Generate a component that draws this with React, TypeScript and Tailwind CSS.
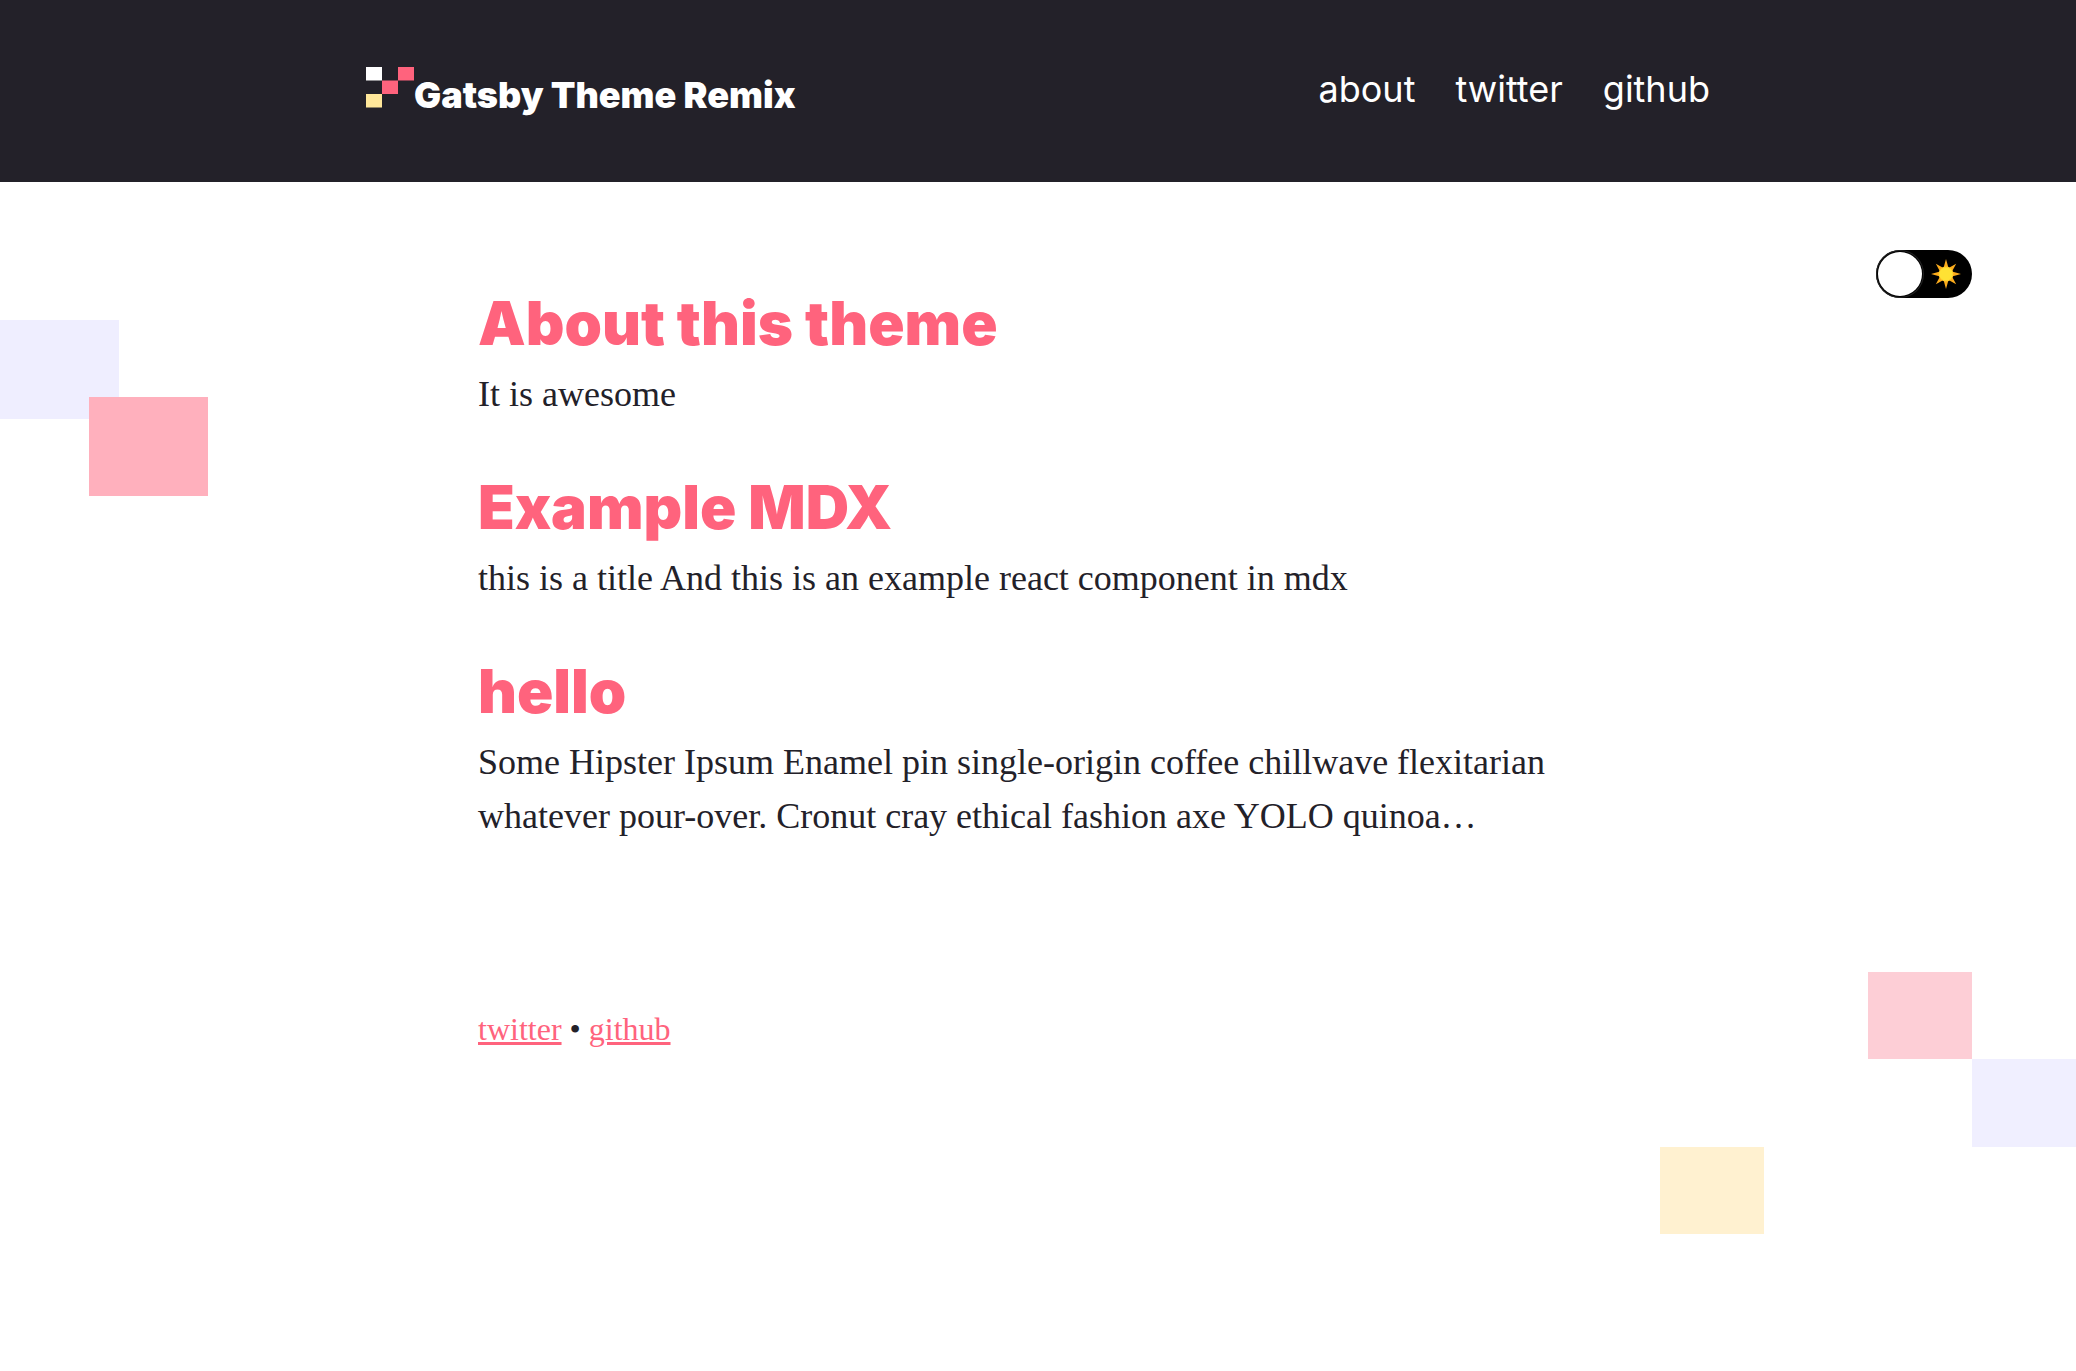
import { useState } from "react";

const posts = [
  { title: "About this theme", excerpt: "It is awesome" },
  { title: "Example MDX", excerpt: "this is a title And this is an example react component in mdx" },
  {
    title: "hello",
    excerpt:
      "Some Hipster Ipsum Enamel pin single-origin coffee chillwave flexitarian whatever pour-over. Cronut cray ethical fashion axe YOLO quinoa…",
  },
];

function Logo() {
  return (
    <svg viewBox="0 0 48 42" className="h-[42px] w-12 shrink-0" aria-hidden="true">
      <rect x="0" y="0" width="16" height="13.5" fill="#ffffff" />
      <rect x="32" y="0" width="16" height="13.5" fill="#ff637d" />
      <rect x="16" y="13.5" width="16" height="13.5" fill="#ff637d" />
      <rect x="0" y="27" width="16" height="13.5" fill="#ffe79a" />
    </svg>
  );
}

function Sun() {
  return (
    <svg viewBox="-15 -15 30 30" className="size-[30px]" aria-hidden="true">
      <path
        d="M0-15 2.5-6 10.2-10.2 6-2.5 15 0 6 2.5 10.2 10.2 2.5 6 0 15-2.5 6-10.2 10.2-6 2.5-15 0-6-2.5-10.2-10.2-2.5-6Z"
        fill="#fbab1c"
      />
      <circle r="7.4" fill="#fdc92a" />
      <circle r="6.6" fill="#ffe234" />
    </svg>
  );
}

function ThemeToggle() {
  const [dark, setDark] = useState(false);
  return (
    <label className="absolute right-[5%] top-[250px] flex h-12 w-24 cursor-pointer items-center justify-between rounded-full bg-black pr-[11px] pl-[2px]">
      <input
        type="checkbox"
        role="switch"
        aria-label="Dark mode"
        checked={dark}
        onChange={(e) => setDark(e.target.checked)}
        className="peer sr-only"
      />
      <span className="size-11 rounded-full bg-white shadow-[0_0_0_1px_#000,0_0_0_2px_#222] transition-transform peer-checked:translate-x-12" />
      <Sun />
    </label>
  );
}

export default function App() {
  return (
    <div className="relative min-h-screen overflow-hidden bg-white font-['Liberation_Serif',serif] text-[#232129]">
      <header className="bg-[#232129] font-['Inter',sans-serif] text-white">
        <div className="mx-auto flex h-[182px] max-w-[1344px] items-center justify-between">
          <a href="#home" className="flex items-start">
            <Logo />
            <span className="pt-2 text-4xl leading-10 font-black">Gatsby Theme Remix</span>
          </a>
          <nav className="flex gap-10 pb-1 text-4xl leading-10">
            <a href="#about">about</a>
            <a href="#twitter">twitter</a>
            <a href="#github">github</a>
          </nav>
        </div>
      </header>

      <div className="pointer-events-none absolute top-80 left-0 h-44 w-52" aria-hidden="true">
        <div className="h-[99px] w-[119px] bg-[#efeeff]" />
        <div className="absolute right-0 bottom-0 h-[99px] w-[119px] bg-[#ffb0bd]" />
      </div>
      <div
        className="pointer-events-none absolute right-0 bottom-[10%] grid h-[262px] w-[416px] grid-cols-4 grid-rows-3"
        aria-hidden="true"
      >
        <div className="col-start-3 row-start-1 bg-[#fdced6]" />
        <div className="col-start-4 row-start-2 bg-[#f0efff]" />
        <div className="col-start-1 row-start-3 bg-[#fff1d0]" />
      </div>

      <ThemeToggle />

      <div className="relative mx-auto w-full max-w-[1120px] pt-[109px]">
        <main className="flex flex-col gap-[54px]">
          {posts.map((post) => (
            <article key={post.title} className="flex flex-col gap-3">
              <h2 className="font-['Inter',sans-serif] text-[60px] leading-[64px] font-black text-[#ff637d]">
                {post.title}
              </h2>
              <p className="text-4xl leading-[54px]">{post.excerpt}</p>
            </article>
          ))}
        </main>
        <footer className="pt-[166px] text-[32px] leading-10">
          <a href="#twitter" className="text-[#ff637d] underline">twitter</a>
          {" • "}
          <a href="#github" className="text-[#ff637d] underline">github</a>
        </footer>
      </div>
    </div>
  );
}
